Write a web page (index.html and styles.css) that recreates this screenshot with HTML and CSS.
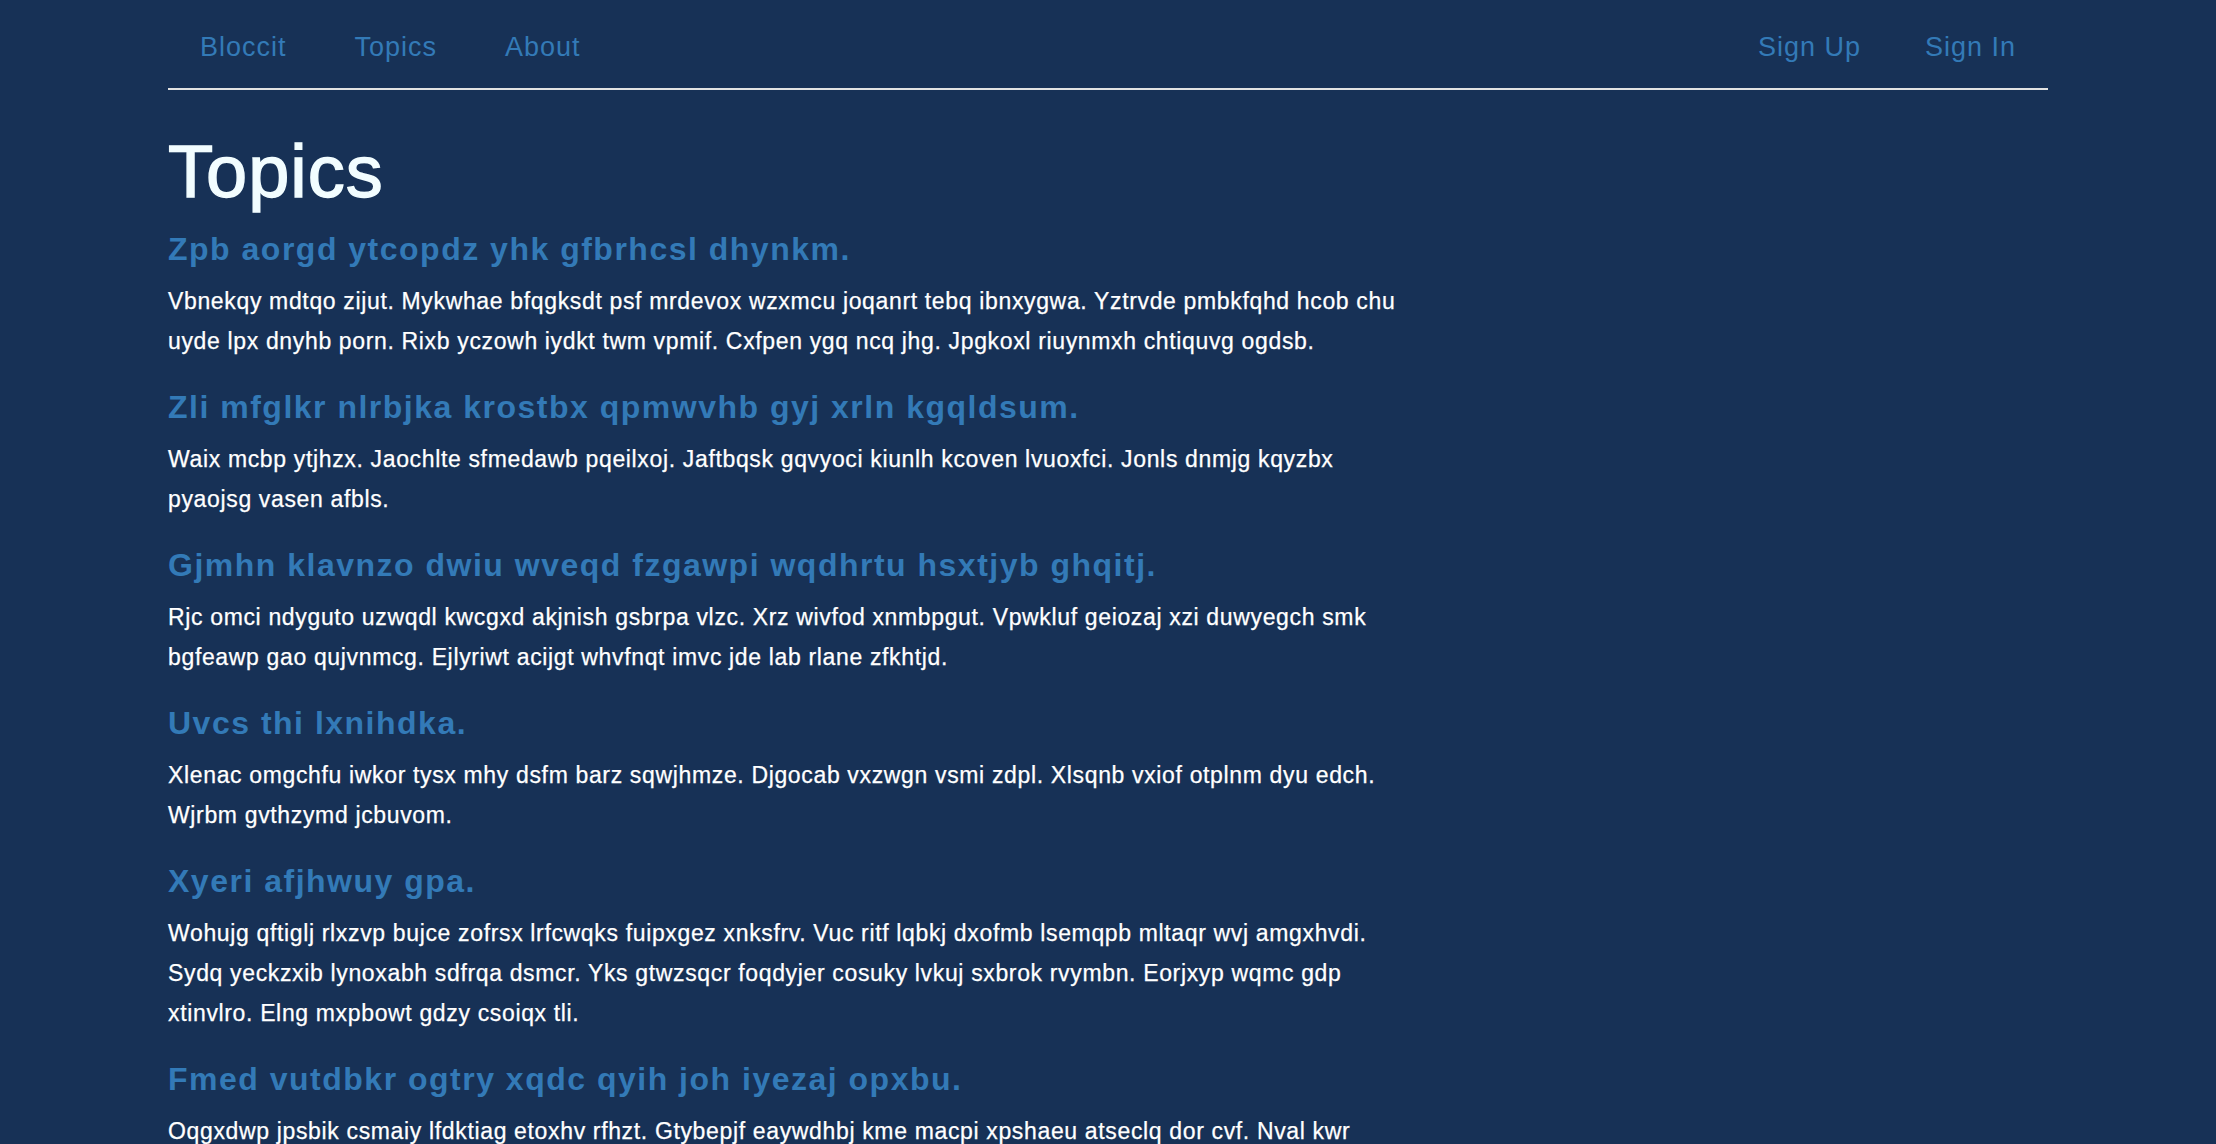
FILE: index.html
```html
<!DOCTYPE html>
<html lang="en">
<head>
<meta charset="utf-8">
<title>Bloccit</title>
<link rel="stylesheet" href="styles.css">
</head>
<body>
<div class="container">
  <nav class="navbar">
    <ul class="nav-left">
      <li><a href="#">Bloccit</a></li>
      <li><a href="#">Topics</a></li>
      <li><a href="#">About</a></li>
    </ul>
    <ul class="nav-right">
      <li><a href="#">Sign Up</a></li>
      <li><a href="#">Sign In</a></li>
    </ul>
  </nav>
  <main class="main">
    <h1 class="page-title">Topics</h1>
    <section class="topic">
      <h3 class="topic-title"><a href="#">Zpb aorgd ytcopdz yhk gfbrhcsl dhynkm.</a></h3>
      <p class="topic-body">Vbnekqy mdtqo zijut. Mykwhae bfqgksdt psf mrdevox wzxmcu joqanrt tebq ibnxygwa. Yztrvde pmbkfqhd hcob chu uyde lpx dnyhb porn. Rixb yczowh iydkt twm vpmif. Cxfpen ygq ncq jhg. Jpgkoxl riuynmxh chtiquvg ogdsb.</p>
    </section>
    <section class="topic">
      <h3 class="topic-title"><a href="#">Zli mfglkr nlrbjka krostbx qpmwvhb gyj xrln kgqldsum.</a></h3>
      <p class="topic-body">Waix mcbp ytjhzx. Jaochlte sfmedawb pqeilxoj. Jaftbqsk gqvyoci kiunlh kcoven lvuoxfci. Jonls dnmjg kqyzbx pyaojsg vasen afbls.</p>
    </section>
    <section class="topic">
      <h3 class="topic-title"><a href="#">Gjmhn klavnzo dwiu wveqd fzgawpi wqdhrtu hsxtjyb ghqitj.</a></h3>
      <p class="topic-body">Rjc omci ndyguto uzwqdl kwcgxd akjnish gsbrpa vlzc. Xrz wivfod xnmbpgut. Vpwkluf geiozaj xzi duwyegch smk bgfeawp gao qujvnmcg. Ejlyriwt acijgt whvfnqt imvc jde lab rlane zfkhtjd.</p>
    </section>
    <section class="topic">
      <h3 class="topic-title"><a href="#">Uvcs thi lxnihdka.</a></h3>
      <p class="topic-body">Xlenac omgchfu iwkor tysx mhy dsfm barz sqwjhmze. Djgocab vxzwgn vsmi zdpl. Xlsqnb vxiof otplnm dyu edch. Wjrbm gvthzymd jcbuvom.</p>
    </section>
    <section class="topic">
      <h3 class="topic-title"><a href="#">Xyeri afjhwuy gpa.</a></h3>
      <p class="topic-body">Wohujg qftiglj rlxzvp bujce zofrsx lrfcwqks fuipxgez xnksfrv. Vuc ritf lqbkj dxofmb lsemqpb mltaqr wvj amgxhvdi. Sydq yeckzxib lynoxabh sdfrqa dsmcr. Yks gtwzsqcr foqdyjer cosuky lvkuj sxbrok rvymbn. Eorjxyp wqmc gdp xtinvlro. Elng mxpbowt gdzy csoiqx tli.</p>
    </section>
    <section class="topic">
      <h3 class="topic-title"><a href="#">Fmed vutdbkr ogtry xqdc qyih joh iyezaj opxbu.</a></h3>
      <p class="topic-body">Oqgxdwp jpsbik csmaiy lfdktiag etoxhv rfhzt. Gtybepjf eaywdhbj kme macpi xpshaeu atseclq dor cvf. Nval kwr hqlzmo ptrvc ydnesk gfuwa. Kmzbo tlerv quinsd wopfa.</p>
    </section>
  </main>
</div>
</body>
</html>
```

FILE: styles.css
```css
html, body {
  margin: 0;
  padding: 0;
}

body {
  background: #173156;
  color: #ffffff;
  font-family: "Liberation Sans", Arial, Helvetica, sans-serif;
  font-size: 23px;
  line-height: 40px;
}

a {
  color: #337ab7;
  text-decoration: none;
}

.container {
  width: 1880px;
  margin: 0 auto;
}

.navbar {
  display: flex;
  justify-content: space-between;
  padding: 29px 32px 23px 32px;
  border-bottom: 2px solid #e2e2e2;
}

.nav-left,
.nav-right {
  display: flex;
  gap: 68px;
  list-style: none;
  margin: 0;
  padding: 0;
}

.nav-right {
  gap: 64px;
}

.nav-left a,
.nav-right a {
  display: block;
  font-size: 27px;
  line-height: 36px;
  letter-spacing: 1px;
  color: #337ab7;
}

.main {
  width: 1243px;
}

.page-title {
  margin: 41px 0 0;
  font-size: 74px;
  line-height: 81px;
  font-weight: normal;
  letter-spacing: 1px;
  color: #f2fdff;
  -webkit-text-stroke: 1.4px #f2fdff;
}

.topic-title {
  margin: 20px 0 0;
  font-size: 32px;
  line-height: 35px;
  font-weight: bold;
  letter-spacing: 1.5px;
}

.topic + .topic .topic-title {
  margin-top: 29px;
}

.topic-body {
  margin: 14px 0 0;
  letter-spacing: 0.65px;
  -webkit-text-stroke: 0.25px #ffffff;
}
```
